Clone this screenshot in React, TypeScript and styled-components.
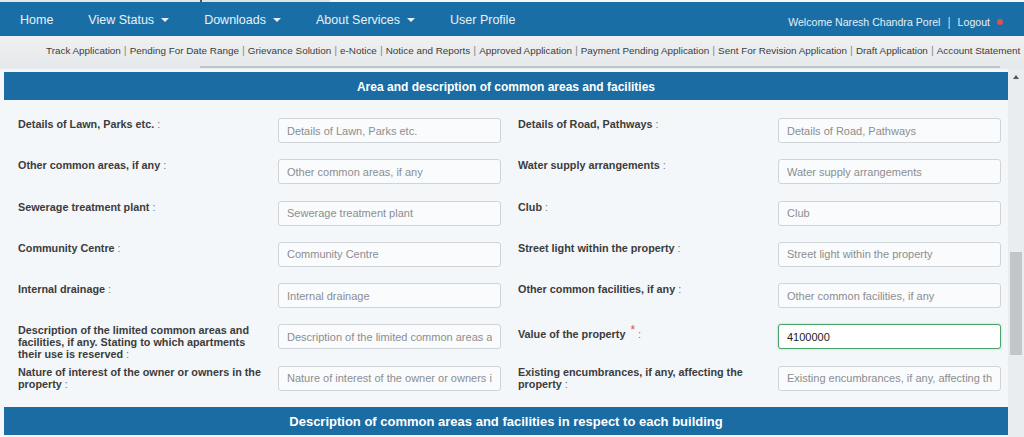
import React from "react";
import styled, { createGlobalStyle } from "styled-components";

type Field = {
  label: string;
  placeholder: string;
  value?: string;
  required?: boolean;
};

const navItems = [
  { title: "Home", menu: false },
  { title: "View Status", menu: true },
  { title: "Downloads", menu: true },
  { title: "About Services", menu: true },
  { title: "User Profile", menu: false },
];

const quickLinks = [
  "Track Application",
  "Pending For Date Range",
  "Grievance Solution",
  "e-Notice",
  "Notice and Reports",
  "Approved Application",
  "Payment Pending Application",
  "Sent For Revision Application",
  "Draft Application",
  "Account Statement",
];

// pairs: left column / right column
const rows: [Field, Field][] = [
  [
    { label: "Details of Lawn, Parks etc.", placeholder: "Details of Lawn, Parks etc." },
    { label: "Details of Road, Pathways", placeholder: "Details of Road, Pathways" },
  ],
  [
    { label: "Other common areas, if any", placeholder: "Other common areas, if any" },
    { label: "Water supply arrangements", placeholder: "Water supply arrangements" },
  ],
  [
    { label: "Sewerage treatment plant", placeholder: "Sewerage treatment plant" },
    { label: "Club", placeholder: "Club" },
  ],
  [
    { label: "Community Centre", placeholder: "Community Centre" },
    { label: "Street light within the property", placeholder: "Street light within the property" },
  ],
  [
    { label: "Internal drainage", placeholder: "Internal drainage" },
    { label: "Other common facilities, if any", placeholder: "Other common facilities, if any" },
  ],
  [
    {
      label: "Description of the limited common areas and facilities, if any. Stating to which apartments their use is reserved",
      placeholder: "Description of the limited common areas and facilities, if any",
    },
    { label: "Value of the property", placeholder: "Value of the property", value: "4100000", required: true },
  ],
  [
    {
      label: "Nature of interest of the owner or owners in the property",
      placeholder: "Nature of interest of the owner or owners in the property",
    },
    {
      label: "Existing encumbrances, if any, affecting the property",
      placeholder: "Existing encumbrances, if any, affecting the property",
    },
  ],
];

export default function App() {
  return (
    <>
      <GlobalStyle />
      <Page>
        <TopStrip />
        <NavBar>
          <NavList>
            {navItems.map((item) => (
              <NavItem key={item.title}>
                {item.title}
                {item.menu && <Caret />}
              </NavItem>
            ))}
          </NavList>
          <UserBox>
            Welcome Naresh Chandra Porel
            <UserSep>|</UserSep>
            Logout
            <LogoutDot />
          </UserBox>
        </NavBar>

        <SubNav>
          <LinkRow>
            {quickLinks.map((link, i) => (
              <React.Fragment key={link}>
                {i > 0 && <LinkSep>|</LinkSep>}
                <QuickLink>{link}</QuickLink>
              </React.Fragment>
            ))}
          </LinkRow>
          <HScroll>
            <HThumb />
          </HScroll>
        </SubNav>

        <Body>
          <Content>
            <SectionHead>Area and description of common areas and facilities</SectionHead>
            <Form>
              {rows.map((pair, i) => (
                <FormRow key={i}>
                  {pair.map((f) => (
                    <FieldCell key={f.label}>
                      <Label>
                        {f.label}
                        {f.required && <Req>*</Req>}
                        {"\u00a0"}
                        <Colon>:</Colon>
                      </Label>
                      <Input
                        placeholder={f.placeholder}
                        defaultValue={f.value}
                        $filled={!!f.value}
                      />
                    </FieldCell>
                  ))}
                </FormRow>
              ))}
            </Form>
            <SectionHead $large>
              Description of common areas and facilities in respect to each building
            </SectionHead>
          </Content>
          <VScroll>
            <UpArrow />
            <VThumb />
          </VScroll>
        </Body>
      </Page>
    </>
  );
}

// Estilização
const GlobalStyle = createGlobalStyle`
  html, body {
    margin: 0;
    padding: 0;
    height: 437px;
    overflow: hidden;
    background: #f2f6f8;
    font-family: "Liberation Sans", Arial, sans-serif;
  }
  * { box-sizing: border-box; }
`;

const Page = styled.div`
  width: 1024px;
  height: 437px;
  display: flex;
  flex-direction: column;
  overflow: hidden;
`;

const TopStrip = styled.div`
  height: 2px;
  background: linear-gradient(90deg, #e4e8ea 0 200px, #555 200px 202px, #dfe4e7 202px 330px, #f4f6f7 330px);
`;

const NavBar = styled.div`
  height: 34px;
  background: #1a6ea6;
  display: flex;
  align-items: center;
  justify-content: space-between;
  padding: 0 21px 0 20px;
`;

const NavList = styled.div`
  display: flex;
  align-items: center;
  gap: 35px;
  margin-top: 1px;
`;

const NavItem = styled.span`
  color: #e8f1f8;
  font-size: 12.5px;
  display: flex;
  align-items: center;
`;

const Caret = styled.span`
  width: 0;
  height: 0;
  margin-left: 7px;
  border-left: 4px solid transparent;
  border-right: 4px solid transparent;
  border-top: 4px solid #e8f1f8;
`;

const UserBox = styled.div`
  color: #e3eef7;
  font-size: 10.6px;
  display: flex;
  align-items: center;
  margin-top: 5px;
`;

const UserSep = styled.span`
  margin: 0 7px;
  color: #c6dcec;
  font-size: 12px;
`;

const LogoutDot = styled.span`
  width: 6px;
  height: 6px;
  border-radius: 50%;
  background: #d9534f;
  margin-left: 7px;
`;

const SubNav = styled.div`
  height: 33px;
  background: linear-gradient(#eef0f1, #e6e9eb);
  display: flex;
  flex-direction: column;
`;

const LinkRow = styled.div`
  height: 28px;
  display: flex;
  align-items: center;
  padding-left: 46px;
  white-space: nowrap;
  overflow: hidden;
`;

const QuickLink = styled.span`
  font-size: 9.9px;
  color: #3c3c3c;
`;

const LinkSep = styled.span`
  font-size: 11px;
  color: #8c8c8c;
  margin: 0 3px;
`;

const HScroll = styled.div`
  height: 5px;
  padding: 2px 24px 0 200px;
`;

const HThumb = styled.div`
  height: 2px;
  background: #bfc6cc;
`;

const Body = styled.div`
  flex: 1;
  display: flex;
  min-height: 0;
`;

const Content = styled.div`
  flex: 1;
  padding: 3px 0 0 4px;
  background: #f3f7f9;
`;

const SectionHead = styled.div<{ $large?: boolean }>`
  height: 28px;
  background: #1a6ca2;
  color: #fff;
  font-weight: bold;
  font-size: ${(p) => (p.$large ? "13px" : "12px")};
  display: flex;
  align-items: center;
  justify-content: center;
  padding-top: 1px;
`;

const Form = styled.div`
  padding: 18px 0 0 0;
  display: flex;
  flex-direction: column;
`;

const FormRow = styled.div`
  height: 41.3px;
  display: grid;
  grid-template-columns: 500px 1fr;
`;

const FieldCell = styled.div`
  display: grid;
  grid-template-columns: 260px 223px;
  align-items: start;
  padding-left: 14px;
`;

const Label = styled.div`
  font-size: 10.8px;
  line-height: 12px;
  font-weight: bold;
  color: #3c3c3c;
  max-width: 248px;
`;

const Colon = styled.span`
  font-weight: normal;
  color: #777;
`;

const Req = styled.span`
  color: #d9534f;
  font-weight: normal;
  vertical-align: 4px;
  margin-left: 5px;
  font-size: 12px;
`;

const Input = styled.input<{ $filled?: boolean }>`
  height: 25px;
  width: 223px;
  border: 1px solid ${(p) => (p.$filled ? "#4aa36a" : "#cfd4d8")};
  border-radius: 3px;
  background: ${(p) => (p.$filled ? "#fff" : "#fafbfc")};
  padding: 0 8px;
  font-family: "Liberation Sans", Arial, sans-serif;
  font-size: 11px;
  color: #222;
  outline: none;
  box-shadow: ${(p) => (p.$filled ? "0 0 2px rgba(74,163,106,0.5)" : "none")};

  &::placeholder {
    color: #8a8e92;
  }
`;

const VScroll = styled.div`
  width: 16px;
  background: #e9edef;
  display: flex;
  flex-direction: column;
  align-items: center;
  padding-top: 6px;
`;

const UpArrow = styled.div`
  width: 0;
  height: 0;
  border-left: 3px solid transparent;
  border-right: 3px solid transparent;
  border-bottom: 4px solid #555;
`;

const VThumb = styled.div`
  width: 12px;
  height: 103px;
  margin-top: 173px;
  background: #c3c6c8;
`;
